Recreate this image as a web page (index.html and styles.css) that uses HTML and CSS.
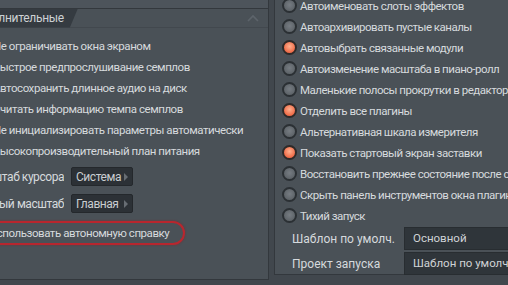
FILE: index.html
```html
<!DOCTYPE html>
<html lang="ru">

<head>
    <meta charset="UTF-8">
    <title>Настройки</title>
    <link rel="stylesheet" href="styles.css">
</head>

<body>
    <div class="col col-left">
        <div class="prev-panel"></div>
        <div class="panel">
            <div class="panel-head">
                <span class="tab">Дополнительные</span>
                <span class="chevron">
                    <svg width="12" height="8" viewBox="0 0 12 8"><path d="M1 7 L6 2 L11 7" fill="none" stroke="#5d646b" stroke-width="1.6"/></svg>
                </span>
            </div>
            <div class="checks">
                <div class="check"><span class="box"></span>Не ограничивать окна экраном</div>
                <div class="check"><span class="box"></span>Быстрое предпрослушивание семплов</div>
                <div class="check"><span class="box"></span>Автосохранить длинное аудио на диск</div>
                <div class="check"><span class="box"></span>Считать информацию темпа семплов</div>
                <div class="check"><span class="box"></span>Не инициализировать параметры автоматически</div>
                <div class="check"><span class="box"></span>Высокопроизводительный план питания</div>
            </div>
            <div class="selects">
                <div class="select-row">
                    <span class="select-label">Масштаб курсора</span>
                    <span class="dropdown">Система <i class="arrow"></i></span>
                </div>
                <div class="select-row">
                    <span class="select-label">Главный масштаб</span>
                    <span class="dropdown">Главная <i class="arrow"></i></span>
                </div>
            </div>
            <div class="check check-marked"><span class="box"></span>Использовать автономную справку</div>
        </div>
    </div>

    <div class="col col-right">
        <div class="panel panel-right">
            <div class="radios">
                <div class="radio"><span class="dot"></span>Автоименовать слоты эффектов</div>
                <div class="radio"><span class="dot"></span>Автоархивировать пустые каналы</div>
                <div class="radio"><span class="dot on"></span>Автовыбрать связанные модули</div>
                <div class="radio"><span class="dot"></span>Автоизменение масштаба в пиано-ролл</div>
                <div class="radio"><span class="dot"></span>Маленькие полосы прокрутки в редакторе</div>
                <div class="radio"><span class="dot on"></span>Отделить все плагины</div>
                <div class="radio"><span class="dot"></span>Альтернативная шкала измерителя</div>
                <div class="radio"><span class="dot on"></span>Показать стартовый экран заставки</div>
                <div class="radio"><span class="dot"></span>Восстановить прежнее состояние после сбоя</div>
                <div class="radio"><span class="dot"></span>Скрыть панель инструментов окна плагина</div>
                <div class="radio"><span class="dot"></span>Тихий запуск</div>
            </div>
            <div class="form">
                <span class="form-label">Шаблон по умолч.</span>
                <span class="field">Основной</span>
                <span class="form-label">Проект запуска</span>
                <span class="field">Шаблон по умолч.</span>
            </div>
        </div>
    </div>
</body>

</html>
```

FILE: styles.css
```css
* {
    margin: 0;
    padding: 0;
    box-sizing: border-box;
}

body {
    width: 508px;
    height: 285px;
    overflow: hidden;
    display: flex;
    background: #41474d;
    font-family: Roboto, "Noto Sans", sans-serif;
    font-size: 11.5px;
    letter-spacing: -0.45px;
    color: #d6dadd;
}

.col {
    flex: none;
}

.col-left {
    width: 309px;
    margin-left: -40px;
}

.prev-panel {
    height: 9px;
    background: #4d545b;
    border-right: 1px solid #33383d;
    border-bottom: 1px solid #33383d;
}

.panel {
    background: #4a5157;
    border: 1px solid #33383d;
    border-top: none;
}

.col-left .panel {
    height: 271px;
}

.panel-head {
    height: 19px;
    display: flex;
    justify-content: space-between;
    align-items: center;
    border-bottom: 1px solid #42484e;
}

.tab {
    height: 19px;
    line-height: 19px;
    padding: 0 14px 0 9px;
    background: #353b41;
    color: #cdd1d4;
    font-size: 12px;
    letter-spacing: -0.3px;
    clip-path: polygon(0 0, 100% 0, calc(100% - 8px) 100%, 0 100%);
}

.chevron {
    margin-right: 9px;
    display: flex;
}

.checks {
    padding-top: 7px;
}

.check {
    height: 21px;
    display: flex;
    align-items: center;
    white-space: nowrap;
}

.box {
    width: 13px;
    height: 13px;
    margin: 0 10px 0 9px;
    border: 1px solid #2b3035;
    background: #5b6268;
    border-radius: 2px;
}

.selects {
    padding-top: 2px;
}

.select-row {
    height: 27px;
    display: flex;
    align-items: center;
}

.select-label {
    width: 103px;
    text-align: right;
    white-space: nowrap;
    overflow: hidden;
    direction: rtl;
    font-size: 12px;
}

.dropdown {
    margin-left: 7px;
    width: 62px;
    height: 19px;
    display: flex;
    align-items: center;
    padding-left: 4px;
    background: #2c3136;
    border: 1px solid #24282c;
    border-radius: 2px;
    color: #c9cdd0;
    font-size: 12px;
}

.arrow {
    margin-left: auto;
    margin-right: 4px;
    width: 0;
    height: 0;
    border-left: 4px solid #676d73;
    border-top: 4px solid transparent;
    border-bottom: 4px solid transparent;
}

.check-marked {
    margin-top: 4px;
    width: 224px;
    height: 24px;
    border: 2px solid #b8262e;
    border-radius: 12px;
    box-shadow: 0 0 2px #7e2a30;
}

.check-marked .box {
    margin-left: 3px;
}

.col-right {
    margin-left: 5px;
    width: 260px;
}

.panel-right {
    height: 280px;
    margin-top: -1px;
    border-left: 1px solid #33383d;
    letter-spacing: -0.5px;
}

.radios {
    margin-top: -5px;
}

.radio {
    height: 21px;
    display: flex;
    align-items: center;
    white-space: nowrap;
}

.dot {
    flex: none;
    width: 15px;
    height: 15px;
    margin: 0 3px 0 7px;
    border-radius: 50%;
    border: 2px solid #2b3034;
    background: radial-gradient(circle at 50% 45%, #767c82 0%, #5e6469 70%);
}

.dot.on {
    background: radial-gradient(circle at 50% 40%, #ffb08f 0%, #f0704c 65%, #d9553a 100%);
    border-color: #2e2a29;
}

.form {
    display: grid;
    grid-template-columns: 112px 1fr;
    grid-auto-rows: 23px;
    row-gap: 2px;
    margin-top: 1px;
    padding-left: 17px;
    align-items: center;
    letter-spacing: 0;
}

.form-label {
    color: #d6dadd;
    font-size: 12px;
}

.field {
    height: 23px;
    line-height: 21px;
    padding-left: 8px;
    background: #2f353a;
    border: 1px solid #282d31;
    color: #cfd3d6;
    font-size: 11.5px;
    white-space: nowrap;
}
```
